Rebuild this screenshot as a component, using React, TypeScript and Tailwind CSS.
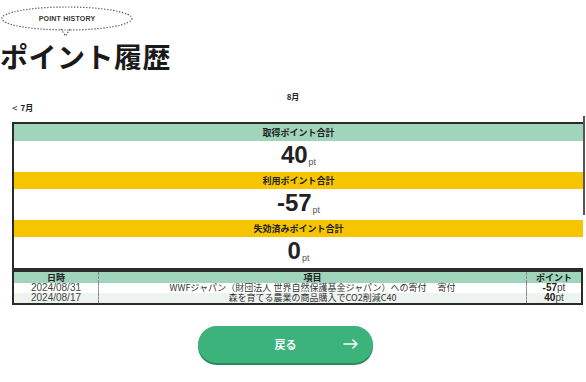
const jp = { fontFamily: '"Noto Sans CJK JP", "Noto Sans", sans-serif' };
const num = { fontFamily: '"Liberation Sans", Arial, sans-serif' };

function Bubble() {
  return (
    <div className="relative h-[38px] w-[136px]">
      <svg width="136" height="38" className="absolute left-0 top-0">
        <path d="M61 28 L65.5 35 L70 28" fill="none" stroke="#444" strokeWidth="1.2" strokeDasharray="1.2 1.8" />
        <ellipse cx="67" cy="17.5" rx="65" ry="11.5" fill="none" stroke="#444" strokeWidth="1.2" strokeDasharray="1.2 1.8" />
      </svg>
      <span
        className="absolute left-0 top-[14px] w-[134px] text-center text-[7px] font-bold leading-none tracking-[0.2px] text-[#333]"
        style={num}
      >
        POINT HISTORY
      </span>
    </div>
  );
}

function SumHead({ label, tone }: { label: string; tone: "green" | "yellow" }) {
  return (
    <div
      className={
        "flex h-[17px] items-center justify-center text-[9px] font-bold text-[#222] " +
        (tone === "green" ? "bg-[#a0d4bb]" : "bg-[#f6c500]")
      }
      style={jp}
    >
      {label}
    </div>
  );
}

function SumValue({ value }: { value: string }) {
  return (
    <div className="flex h-[31px] items-end justify-center pb-[5px] text-[#222]" style={num}>
      <span className="text-[24px] font-bold leading-none">{value}</span>
      <span className="ml-[1px] text-[9px] leading-none text-[#555]">pt</span>
    </div>
  );
}

const rows = [
  { date: "2024/08/31", item: "WWFジャパン（財団法人 世界自然保護基金ジャパン）への寄付　 寄付", pt: "-57", bg: "bg-white" },
  { date: "2024/08/17", item: "森を育てる農業の商品購入でCO2削減C40", pt: "40", bg: "bg-[#edf3ef]" },
];

export default function App() {
  return (
    <div className="relative h-[382px] w-[586px] overflow-hidden bg-white text-[#222]">
      <div className="pt-[1px]">
        <Bubble />
      </div>
      <h1 className="mt-[1px] h-[32px] text-[28px] font-bold leading-[32px] tracking-[0.5px] text-[#1a1a1a]" style={jp}>
        ポイント履歴
      </h1>

      <div className="mt-[20px] text-center text-[8px] font-bold leading-[10px]" style={jp}>
        8月
      </div>
      <div className="ml-[12px] mt-[1px] flex items-center gap-[3px] text-[8px] font-bold leading-[10px]" style={jp}>
        <span className="text-[10px] font-normal">&lt;</span>
        <span>7月</span>
      </div>

      <div className="relative mx-[12px] mt-[9px] w-[571px]">
        <div className="border-l-2 border-t-2 border-[#2a2a2a]">
          <SumHead label="取得ポイント合計" tone="green" />
          <SumValue value="40" />
          <SumHead label="利用ポイント合計" tone="yellow" />
          <SumValue value="-57" />
          <SumHead label="失効済みポイント合計" tone="yellow" />
          <SumValue value="0" />
        </div>
        <div className="absolute right-[-2px] top-[-6px] h-[99px] w-[2px] bg-[#555]" />

        <div className="border-[2px] border-t-[4px] border-[#2a2a2a]" style={jp}>
          <div className="grid h-[11px] grid-cols-[84px_1fr_55px] bg-[#a0d4bb] text-[9px] font-bold leading-[11px]">
            <div className="text-center">日時</div>
            <div className="border-l border-dashed border-[#888] text-center">項目</div>
            <div className="border-l border-dashed border-[#888] text-center">ポイント</div>
          </div>
          {rows.map((r) => (
            <div key={r.date} className={"grid h-[10px] grid-cols-[84px_1fr_55px] " + r.bg}>
              <div className="text-center text-[10px] leading-[10px] text-[#444]" style={num}>
                {r.date}
              </div>
              <div className="border-l border-dashed border-[#888] text-center text-[9px] leading-[10px] text-[#333]">
                {r.item}
              </div>
              <div className="border-l border-dashed border-[#888] text-center text-[10px] leading-[10px]" style={num}>
                <span className="font-bold">{r.pt}</span>
                <span className="text-[#444]">pt</span>
              </div>
            </div>
          ))}
        </div>
      </div>

      <div className="mt-[21px] flex justify-center pr-[15px]">
        <button
          className="relative flex h-[37px] w-[175px] items-center justify-center rounded-full bg-[#3bb37a] text-[11px] font-bold text-white shadow-[0_2px_0_#2c8a5c]"
          style={jp}
        >
          戻る
          <svg width="16" height="10" viewBox="0 0 16 10" className="absolute right-[14px] top-[13px]">
            <path d="M1 5 H14 M10 1 L14 5 L10 9" fill="none" stroke="white" strokeWidth="1.6" strokeLinecap="round" strokeLinejoin="round" />
          </svg>
        </button>
      </div>
    </div>
  );
}
